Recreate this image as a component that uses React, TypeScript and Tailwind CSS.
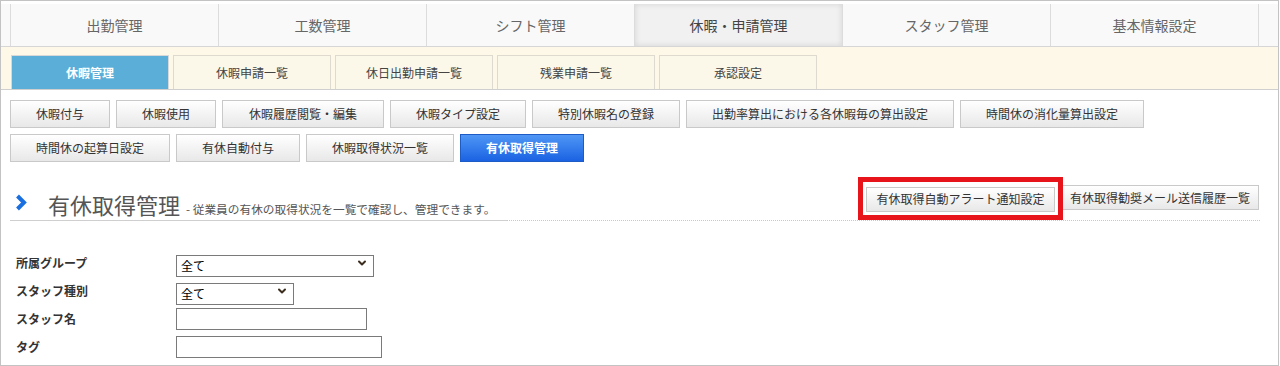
import { ChevronDown } from "lucide-react";

const mainTabs = ["出勤管理", "工数管理", "シフト管理", "休暇・申請管理", "スタッフ管理", "基本情報設定"];
const subTabs = ["休暇管理", "休暇申請一覧", "休日出勤申請一覧", "残業申請一覧", "承認設定"];

const rowOne = [
  { label: "休暇付与", w: "w-[100px]" },
  { label: "休暇使用", w: "w-[100px]" },
  { label: "休暇履歴閲覧・編集", w: "w-[162px]" },
  { label: "休暇タイプ設定", w: "w-[136px]" },
  { label: "特別休暇名の登録", w: "w-[148px]" },
  { label: "出勤率算出における各休暇毎の算出設定", w: "w-[268px]" },
  { label: "時間休の消化量算出設定", w: "w-[184px]" },
];

const rowTwo = [
  { label: "時間休の起算日設定", w: "w-[160px]" },
  { label: "有休自動付与", w: "w-[124px]" },
  { label: "休暇取得状況一覧", w: "w-[148px]" },
  { label: "有休取得管理", w: "w-[124px]", active: true },
];

function ActionButton({ label, w, active }: { label: string; w: string; active?: boolean }) {
  if (active) {
    return (
      <button
        type="button"
        className={`${w} h-[28px] border border-[#1d5cc4] bg-linear-to-b from-[#4f96f5] to-[#1a62e2] text-[12px] font-bold text-white`}
      >
        {label}
      </button>
    );
  }
  return (
    <button
      type="button"
      className={`${w} h-[28px] border border-[#c9c9c9] bg-linear-to-b from-white to-[#e8e8e8] text-[12px] text-[#333]`}
    >
      {label}
    </button>
  );
}

function SelectBox({ w }: { w: string }) {
  return (
    <div className={`relative ${w} h-[22px]`}>
      <select className="h-full w-full appearance-none border border-[#7a7a7a] bg-white pl-[4px] text-[12px] text-black outline-none">
        <option>全て</option>
      </select>
      <ChevronDown
        className="pointer-events-none absolute right-[6px] top-[5px] h-[12px] w-[12px] text-[#3b2e1e]"
        strokeWidth={4}
      />
    </div>
  );
}

export default function App() {
  return (
    <div
      className="h-[366px] w-[1280px] overflow-hidden bg-white"
      style={{ fontFamily: '"Noto Sans CJK JP", "Noto Sans", sans-serif' }}
    >
      <div className="h-[366px] w-[1279px] border border-[#c3c3c3] pt-[3px]">
        {/* main nav */}
        <div className="flex h-[43px] border-b border-[#d6d6d6] bg-[#f9f9f9]">
          <div className="w-[9px]" />
          {mainTabs.map((tab, i) => (
            <div
              key={tab}
              className={`flex w-[208px] items-center justify-center border-l border-[#dcdcdc] text-[14px] ${
                i === 3
                  ? "bg-[#f1f1f1] text-[#444] shadow-[inset_0_0_6px_rgba(0,0,0,0.12)]"
                  : "text-[#666]"
              }`}
            >
              {tab}
            </div>
          ))}
          <div className="flex-1 border-l border-[#dcdcdc]" />
        </div>

        {/* sub nav */}
        <div className="flex h-[43px] gap-[4px] border-b border-[#cfcfcf] bg-[#fdf8e8] pl-[10px] pt-[8px]">
          {subTabs.map((tab, i) => (
            <div
              key={tab}
              className={`flex w-[158px] items-center justify-center border border-b-0 text-[12px] ${
                i === 0
                  ? "border-[#d8d8d8] bg-[#5aaed8] font-bold text-white"
                  : "border-[#dedad0] bg-[#fbf7e9] text-[#444]"
              }`}
            >
              {tab}
            </div>
          ))}
        </div>

        {/* function buttons */}
        <div className="mt-[10px] flex gap-[6px] px-[9px]">
          {rowOne.map((b) => (
            <ActionButton key={b.label} {...b} />
          ))}
        </div>
        <div className="mt-[6px] flex gap-[6px] px-[9px]">
          {rowTwo.map((b) => (
            <ActionButton key={b.label} {...b} />
          ))}
        </div>

        {/* title */}
        <div className="ml-[9px] mr-[18px] mt-[23px] flex items-end justify-between border-b border-dotted border-[#c8c8c8]">
          <div className="-mb-px flex w-[497px] items-center border-b border-[#cfcfcf] pb-[1px]">
            <svg className="mb-[4px] ml-[5px] mr-[20px] h-[17px] w-[13px]" viewBox="0 0 13 17">
              <polyline points="2.5,2 9,8.5 2.5,15" fill="none" stroke="#1a6fe0" strokeWidth="4" />
            </svg>
            <div className="flex items-baseline">
              <h1 className="text-[22px] leading-[29px] text-[#555]">有休取得管理</h1>
              <span className="ml-[6px] text-[11.7px] text-[#555]">- 従業員の有休の取得状況を一覧で確認し、管理できます。</span>
            </div>
          </div>
          <div className="mb-[8px] flex gap-[6px] pr-[1px]">
            <div className="relative">
              <button
                type="button"
                className="h-[25px] w-[189px] border border-[#c9c9c9] bg-linear-to-b from-white to-[#e8e8e8] text-[12px] text-[#333]"
              >
                有休取得自動アラート通知設定
              </button>
              <div className="pointer-events-none absolute -inset-[8px] z-10 border-[5px] border-[#e8141c]" />
            </div>
            <button
              type="button"
              className="h-[25px] w-[198px] border border-[#c9c9c9] bg-linear-to-b from-white to-[#e8e8e8] text-[12px] text-[#333]"
            >
              有休取得勧奨メール送信履歴一覧
            </button>
          </div>
        </div>

        {/* search form */}
        <div className="mt-[28px] pl-[15px]">
          <div className="flex h-[28px] items-center">
            <label className="w-[160px] text-[12px] font-bold text-[#333]">所属グループ</label>
            <SelectBox w="w-[198px]" />
          </div>
          <div className="flex h-[28px] items-center">
            <label className="w-[160px] text-[12px] font-bold text-[#333]">スタッフ種別</label>
            <SelectBox w="w-[118px]" />
          </div>
          <div className="flex h-[28px] items-center">
            <label className="w-[160px] text-[12px] font-bold text-[#333]">スタッフ名</label>
            <input className="h-[22px] w-[191px] border border-[#7a7a7a] outline-none" />
          </div>
          <div className="flex h-[28px] items-center">
            <label className="w-[160px] text-[12px] font-bold text-[#333]">タグ</label>
            <input className="h-[22px] w-[206px] border border-[#7a7a7a] outline-none" />
          </div>
        </div>
      </div>
    </div>
  );
}
